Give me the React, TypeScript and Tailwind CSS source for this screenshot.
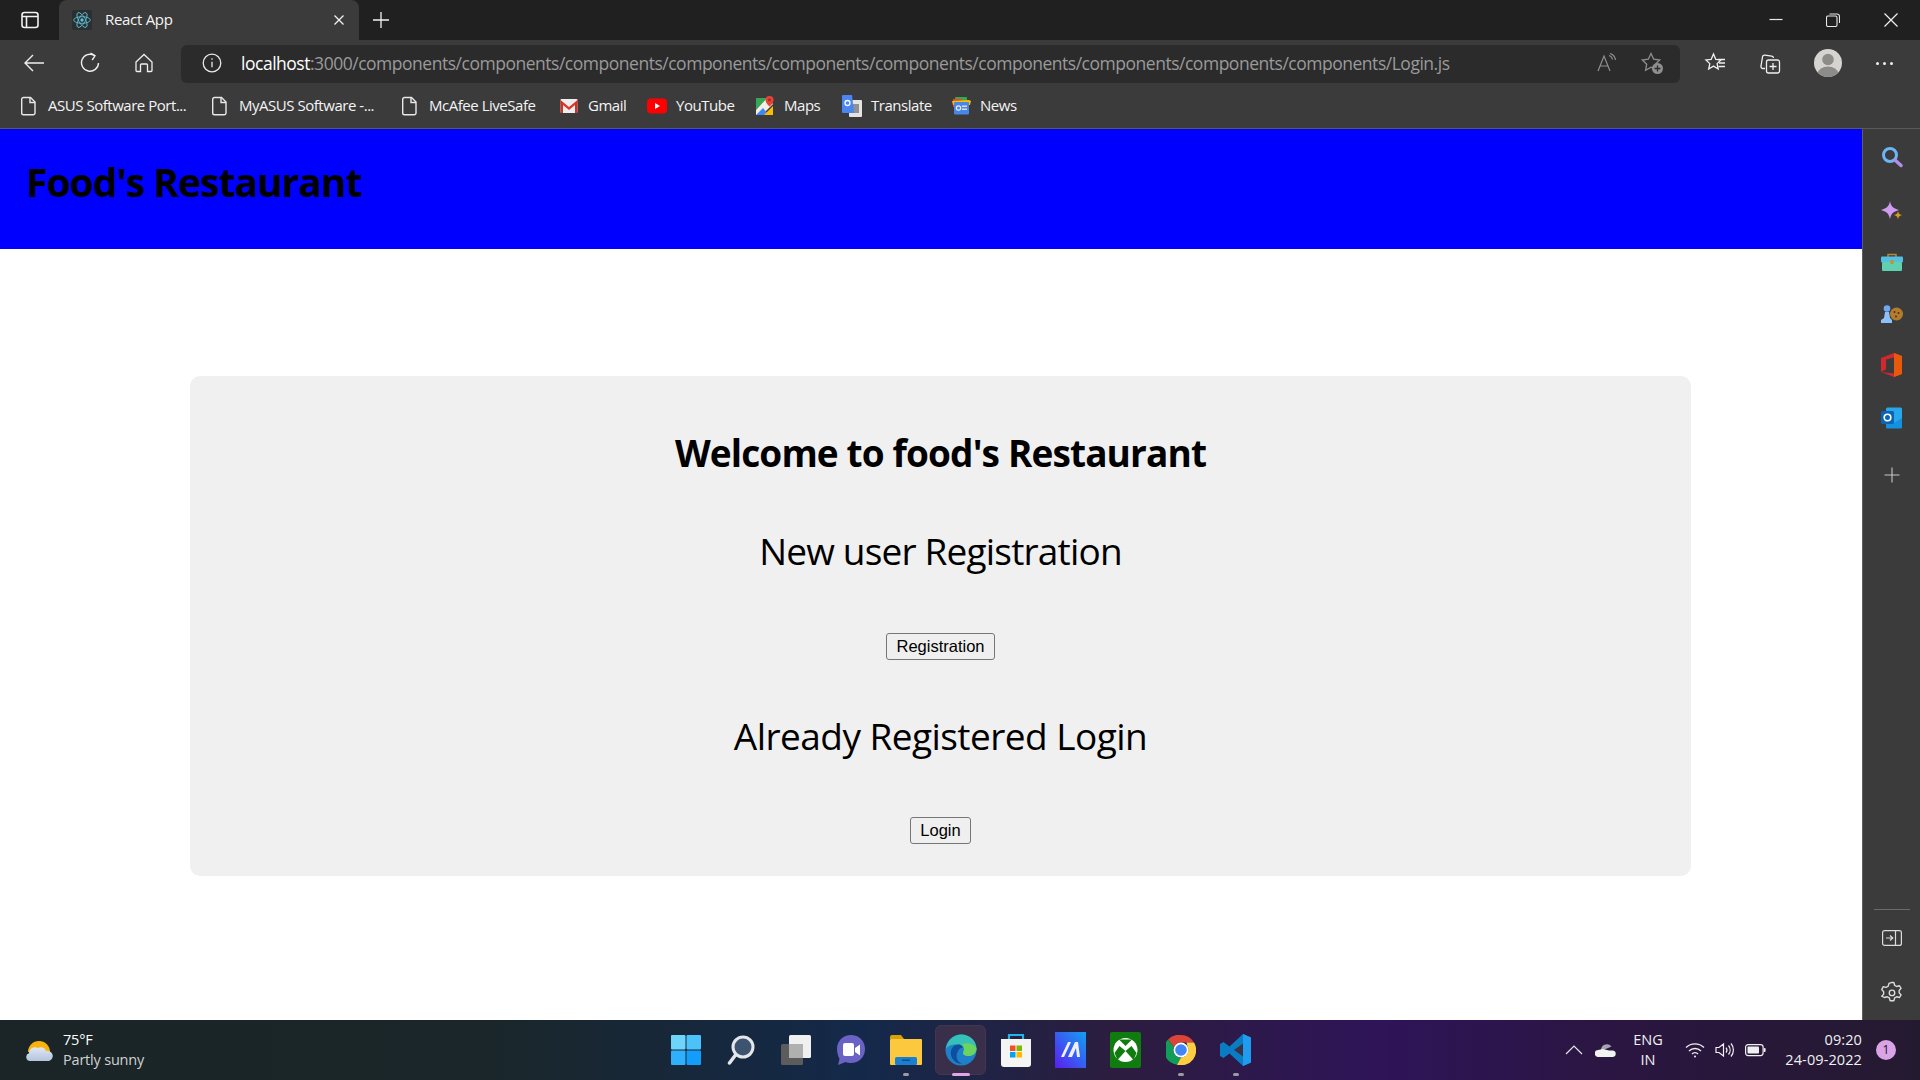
import React from 'react';

const uiFont = "font-['Open_Sans','Noto_Sans',sans-serif]";

const PageIcon = () => (
  <svg width="18" height="20" viewBox="0 0 18 20" fill="none" stroke="#e8e8e8" strokeWidth="1.4">
    <path d="M3.5 1.5h7l4.5 4.5v11a1.8 1.8 0 0 1-1.8 1.8H3.5a1.8 1.8 0 0 1-1.8-1.8V3.3a1.8 1.8 0 0 1 1.8-1.8z" />
    <path d="M10 1.5v5h5" />
  </svg>
);

const GmailIcon = () => (
  <svg width="18" height="16" viewBox="0 0 18 16">
    <rect x="0.5" y="1" width="17" height="14" rx="1" fill="#eeeeee" />
    <path d="M0.5 2 9 9l8.5-7v3L9 12 0.5 5z" fill="#d9392c" />
    <path d="M0.5 2v13h2.5V5zM17.5 2v13H15V5z" fill="#c5362a" />
  </svg>
);

const YouTubeIcon = () => (
  <svg width="20" height="16" viewBox="0 0 20 16">
    <rect y="0.5" width="20" height="15" rx="4" fill="#ff0000" />
    <path d="M8 5l5 3-5 3z" fill="#fff" />
  </svg>
);

const MapsIcon = () => (
  <svg width="18" height="20" viewBox="0 0 18 20">
    <path d="M0 2h11L0 14z" fill="#34a853" />
    <path d="M0 14 11 2l6 6L6 19H0z" fill="#f3f0e6" />
    <path d="M0 19l7-7 6 7z" fill="#4285f4" />
    <path d="M8 19l9-9v9z" fill="#fbbc04" />
    <path d="M13.5 0a4 4 0 0 1 4 4c0 3-4 6.500-4 6.500S9.500 7 9.500 4a4 4 0 0 1 4-4z" fill="#ea4335" />
    <circle cx="13.500" cy="4" r="1.400" fill="#9c2b22" />
  </svg>
);

const TranslateIcon = () => (
  <svg width="20" height="22" viewBox="0 0 20 22">
    <rect x="7" y="5" width="13" height="17" rx="1" fill="#e4e4e4" />
    <rect x="11" y="9" width="6" height="9" fill="#6d6d6d" opacity="0.7" />
    <path d="M1 0h9l2 18H1a1 1 0 0 1-1-1V1a1 1 0 0 1 1-1z" fill="#4a86f0" />
    <circle cx="5.500" cy="8" r="2.500" fill="none" stroke="#fff" strokeWidth="1.300" />
  </svg>
);

const NewsIcon = () => (
  <svg width="20" height="18" viewBox="0 0 20 18">
    <rect x="4" y="0" width="12" height="8" rx="1" fill="#34a853" />
    <rect x="2" y="2" width="9" height="8" fill="#ea4335" />
    <path d="M1 4l17-1 2 1-1 4H2z" fill="#fbbc04" />
    <rect x="3" y="5" width="15" height="12.500" rx="1" fill="#4a86e8" />
    <rect x="11" y="8.500" width="5" height="1.500" fill="#cfe0fb" />
    <rect x="11" y="11.500" width="5" height="1.500" fill="#cfe0fb" />
    <circle cx="7.500" cy="11" r="2.200" fill="none" stroke="#e6effd" strokeWidth="1.200" />
  </svg>
);

const bookmarks = [
  { label: 'ASUS Software Port...', icon: <PageIcon />, width: 'w-[191px]' },
  { label: 'MyASUS Software -...', icon: <PageIcon />, width: 'w-[190px]' },
  { label: 'McAfee LiveSafe', icon: <PageIcon />, width: 'w-[159px]' },
  { label: 'Gmail', icon: <GmailIcon />, width: 'w-[88px]' },
  { label: 'YouTube', icon: <YouTubeIcon />, width: 'w-[108px]' },
  { label: 'Maps', icon: <MapsIcon />, width: 'w-[87px]' },
  { label: 'Translate', icon: <TranslateIcon />, width: 'w-[109px]' },
  { label: 'News', icon: <NewsIcon />, width: 'w-[80px]' },
];

const ReactIcon = () => (
  <svg width="20" height="20" viewBox="-12 -12 24 24" fill="none" stroke="#61c3d8" strokeWidth="1">
    <rect x="-12" y="-12" width="24" height="24" rx="2" fill="#2a2f31" stroke="none" />
    <circle r="2" fill="#61c3d8" stroke="none" />
    <ellipse rx="10" ry="4" />
    <ellipse rx="10" ry="4" transform="rotate(60)" />
    <ellipse rx="10" ry="4" transform="rotate(120)" />
  </svg>
);

const TitleBar = () => (
  <div className="flex h-10 items-end bg-[#202020] text-white">
    <div className="flex h-10 w-[59px] items-center justify-center">
      <svg width="20" height="20" viewBox="0 0 20 20" fill="none" stroke="#f2f2f2" strokeWidth="1.600">
        <rect x="2" y="2.500" width="16" height="15" rx="2.500" />
        <path d="M2 6.500h16M6.500 6.500v11" />
      </svg>
    </div>
    <div className="flex h-10 w-[300px] items-center rounded-t-lg bg-[#3b3b3b] pl-[13px]">
      <ReactIcon />
      <span className="-mt-px ml-[13px] w-[228px] text-[15px] tracking-[-0.3px] text-[#f5f5f5]">React App</span>
      <svg width="12" height="12" viewBox="0 0 12 12" stroke="#f2f2f2" strokeWidth="1.300">
        <path d="M1.500 1.500l9 9M10.500 1.500l-9 9" />
      </svg>
    </div>
    <div className="flex h-10 w-[44px] items-center justify-center">
      <svg width="18" height="18" viewBox="0 0 18 18" stroke="#f2f2f2" strokeWidth="1.300">
        <path d="M9 1v16M1 9h16" />
      </svg>
    </div>
    <div className="flex-1" />
    <div className="flex h-10 items-center pr-[22px]">
      <svg width="14" height="14" viewBox="0 0 14 14" stroke="#e8e8e8" strokeWidth="1.200">
        <path d="M0.500 6.500h13" />
      </svg>
      <svg className="ml-[43px]" width="14" height="14" viewBox="0 0 14 14" fill="none" stroke="#e8e8e8" strokeWidth="1.100">
        <rect x="0.500" y="3" width="10.500" height="10.500" rx="1.500" />
        <path d="M3.500 1h7.500a2.500 2.500 0 0 1 2.500 2.500V10" />
      </svg>
      <svg className="ml-[44px]" width="14" height="14" viewBox="0 0 14 14" stroke="#f2f2f2" strokeWidth="1.200">
        <path d="M0.500 0.500l13 13M13.500 0.500l-13 13" />
      </svg>
    </div>
  </div>
);

const AddressBar = () => (
  <div className="flex h-[43px] items-end bg-[#3b3b3b]">
    <div className="flex h-[38px] w-[181px] items-center pb-[2px] pl-[23px]">
      <svg width="22" height="20" viewBox="0 0 22 20" fill="none" stroke="#efefef" strokeWidth="1.400">
        <path d="M21 10H2M10 2l-8 8 8 8" />
      </svg>
      <svg className="ml-[35px]" width="20" height="22" viewBox="0 0 20 22" fill="none" stroke="#efefef" strokeWidth="1.400">
        <path d="M14.500 3.500A8.500 8.500 0 1 0 18.500 11" />
        <path d="M10.500 1l4.500 2.800-2.800 4.200" />
      </svg>
      <svg className="ml-[34px]" width="20" height="20" viewBox="0 0 20 20" fill="none" stroke="#efefef" strokeWidth="1.300">
        <path d="M2 9l8-7.500L18 9v8.500a1 1 0 0 1-1 1h-3.500V12a1 1 0 0 0-1-1h-5a1 1 0 0 0-1 1v6.500H3a1 1 0 0 1-1-1z" />
      </svg>
    </div>
    <div className="flex h-[38px] w-[1499px] items-center rounded-md bg-[#2b2b2b] pb-[2px] pl-[21px]">
      <svg width="20" height="20" viewBox="0 0 20 20" fill="none" stroke="#e8e8e8" strokeWidth="1.300">
        <circle cx="10" cy="10" r="8.800" />
        <path d="M10 8.800v5.500M10 5.200v1.600" />
      </svg>
      <span className={`ml-[19px] w-[1340px] whitespace-nowrap text-[17.500px] tracking-[-0.48px] ${uiFont}`}>
        <span className="text-white">localhost</span>
        <span className="text-[#9a9a9a]">:3000/components/components/components/components/components/components/components/components/components/components/Login.js</span>
      </span>
      <svg className="ml-[16px]" width="20" height="20" viewBox="0 0 20 20" fill="none" stroke="#8f8f8f" strokeWidth="1.200">
        <path d="M1 18L7 3l6 15M3.200 13h7.600" />
        <path d="M12 2.500a5 5 0 0 1 3.500 4M13 0.500a8 8 0 0 1 5.500 6.500" />
      </svg>
      <svg className="ml-[23px]" width="24" height="24" viewBox="0 0 24 24" fill="none" stroke="#8f8f8f" strokeWidth="1.300">
        <path d="M11 2.500l2.700 5.700 6 .8-4.400 4.200 1.100 6-5.400-3-5.400 3 1.100-6L2.300 9l6-.8z" />
        <circle cx="17.500" cy="17.500" r="5.500" fill="#8f8f8f" stroke="none" />
        <path d="M17.500 14.500v6M14.500 17.500h6" stroke="#2b2b2b" strokeWidth="1.300" />
      </svg>
    </div>
    <div className="flex h-[38px] items-center pb-[2px]">
      <svg className="ml-[24px]" width="22" height="22" viewBox="0 0 22 22" fill="none" stroke="#efefef" strokeWidth="1.300">
        <path d="M9.500 2l2.300 5.300 5.200.6-3.900 3.700 1.100 5.400-4.700-2.900-4.800 2.900 1.100-5.400L1.900 7.900l5.300-.6z" />
        <path d="M14 7.500h7M15 11h6M14.500 14.500h6.500" />
      </svg>
      <svg className="ml-[33px]" width="22" height="22" viewBox="0 0 22 22" fill="none" stroke="#efefef" strokeWidth="1.300">
        <path d="M6 16.500H4a2 2 0 0 1-2-2.500l1.500-9a2 2 0 0 1 2.300-1.800l7 1a2 2 0 0 1 1.700 1.800" />
        <rect x="7.500" y="8" width="13" height="13" rx="2" />
        <path d="M14 11v7M10.500 14.500h7" />
      </svg>
      <svg className="ml-[33px]" width="28" height="28" viewBox="0 0 28 28">
        <clipPath id="avatarClip">
          <circle cx="14" cy="14" r="14" />
        </clipPath>
        <g clipPath="url(#avatarClip)">
          <rect width="28" height="28" fill="#d6d4d0" />
          <circle cx="14" cy="10.500" r="5.800" fill="#8e8c88" />
          <ellipse cx="14" cy="24" rx="10" ry="6.500" fill="#8e8c88" />
        </g>
      </svg>
      <div className="ml-[34px] flex items-center gap-[4px]">
        <span className="size-[3px] rounded-full bg-[#f0f0f0]" />
        <span className="size-[3px] rounded-full bg-[#f0f0f0]" />
        <span className="size-[3px] rounded-full bg-[#f0f0f0]" />
      </div>
    </div>
  </div>
);

const BookmarksBar = () => (
  <div className="flex h-[46px] items-center border-b border-[#5a5a5a] bg-[#3b3b3b] pl-[19px]">
    {bookmarks.map((b) => (
      <div key={b.label} className={`flex items-center ${b.width}`}>
        <span className="flex w-[20px] justify-center">{b.icon}</span>
        <span className="ml-[9px] whitespace-nowrap text-[15px] tracking-[-0.47px] text-[#f4f4f4]">{b.label}</span>
      </div>
    ))}
  </div>
);

const SideBar = () => (
  <div className="flex w-[58px] flex-col items-center border-l border-[#5e5e5e] bg-[#3b3b3b] pt-[17px]">
    <svg width="22" height="22" viewBox="0 0 22 22" fill="none">
      <circle cx="9" cy="9" r="6.500" stroke="#6db5f5" strokeWidth="3" />
      <path d="M14 14l6 5.500" stroke="#b08fe8" strokeWidth="3.500" strokeLinecap="round" />
    </svg>
    <svg className="mt-[33px]" width="22" height="22" viewBox="0 0 22 22">
      <path d="M9 0c.8 5 2.800 7.200 9 9-6.200 1.800-8.200 4-9 9.500C8.200 13 6 10.800 0 9c6-1.800 8.200-4 9-9z" fill="#cf9cf2" />
      <path d="M17 10c.4 2.500 1.200 3.400 4 4-2.800.8-3.600 1.600-4 4.500-.4-2.900-1.200-3.700-4-4.500 2.800-.6 3.600-1.500 4-4z" fill="#d89a20" />
    </svg>
    <svg className="mt-[30px]" width="22" height="18" viewBox="0 0 22 18">
      <path d="M7 4V1.500h8V4" fill="none" stroke="#b08a3c" strokeWidth="1.500" />
      <rect y="3.500" width="22" height="6" rx="1" fill="#55bfe0" />
      <rect x="1" y="9" width="20" height="9" rx="1" fill="#5fd0b0" />
      <rect x="9.500" y="7" width="3" height="4" fill="#c98f2d" />
    </svg>
    <svg className="mt-[34px]" width="22" height="18" viewBox="0 0 22 18">
      <circle cx="15.500" cy="9" r="6.500" fill="#b27c2c" />
      <circle cx="13.500" cy="7" r="1" fill="#4e3212" />
      <circle cx="17.500" cy="8" r="1" fill="#4e3212" />
      <circle cx="15" cy="11.500" r="1" fill="#4e3212" />
      <circle cx="6" cy="3.500" r="3.300" fill="#6ea9f2" />
      <path d="M4 7h4l1 6 2 2v3H0v-3l3-2z" fill="#8cc0fa" />
    </svg>
    <svg className="mt-[30px]" width="22" height="24" viewBox="0 0 22 24">
      <path d="M0 5 13 0l8 3v18l-8 3L0 19l13 1.500V4.500L5 6.500v10L0 19z" fill="#d2272f" />
      <path d="M13 0l8 3v18l-8 3z" fill="#e8590c" />
    </svg>
    <svg className="mt-[30px]" width="22" height="22" viewBox="0 0 22 22">
      <rect x="5" y="0.500" width="16" height="20" rx="1.500" fill="#28a8ea" />
      <path d="M5 11l8 5 8-5v9.500a1 1 0 0 1-1 1H6a1 1 0 0 1-1-1z" fill="#1490df" />
      <rect y="4" width="13" height="13" rx="1.500" fill="#0a64b5" />
      <circle cx="6.500" cy="10.500" r="3.300" fill="none" stroke="#fff" strokeWidth="1.600" />
    </svg>
    <svg className="mt-[38px]" width="16" height="16" viewBox="0 0 16 16" stroke="#c8c8c8" strokeWidth="1.100">
      <path d="M8 0.500v15M0.500 8h15" />
    </svg>
    <div className="flex-1" />
    <div className="h-px w-[36px] bg-[#6b6b6b]" />
    <svg className="mt-[20px]" width="20" height="16" viewBox="0 0 20 16" fill="none" stroke="#dcdcdc" strokeWidth="1.200">
      <rect x="0.600" y="0.600" width="18.800" height="14.800" rx="2" />
      <path d="M13.500 0.600v14.800M4 8h6.500M8 5.500 10.800 8 8 10.500" />
    </svg>
    <svg className="mb-[17px] mt-[35px]" width="22" height="22" viewBox="0 0 24 24" fill="none" stroke="#dcdcdc" strokeWidth="1.500" strokeLinejoin="round">
      <path d="M12 1.500l2 .2.900 3 2.300 1.300 3-.8 1.700 2.800-2.100 2.300v2.600l2.100 2.300-1.700 2.800-3-.8-2.300 1.300-.9 3h-4l-.9-3-2.300-1.300-3 .8L.8 16.600l2.100-2.300v-2.600L.8 9.400 2.500 6.200l3 .8 2.300-1.300.9-3z" />
      <circle cx="12" cy="13" r="3" />
    </svg>
  </div>
);

const Dot = ({ wide }: { wide?: boolean }) => (
  <span className={`mt-[3px] h-[3px] rounded-full ${wide ? 'w-[18px] bg-[#e2a6e8]' : 'w-[6px] bg-[#9b9ba3]'}`} />
);

const taskIcons = [
  {
    key: 'start',
    svg: (
      <svg width="30" height="30" viewBox="0 0 30 30">
        <rect width="14.500" height="14.500" rx="1" fill="#6fd4fb" />
        <rect x="15.500" width="14.500" height="14.500" rx="1" fill="#4cc2fa" />
        <rect y="15.500" width="14.500" height="14.500" rx="1" fill="#2eb1fa" />
        <rect x="15.500" y="15.500" width="14.500" height="14.500" rx="1" fill="#129dfa" />
      </svg>
    ),
  },
  {
    key: 'search',
    svg: (
      <svg width="28" height="30" viewBox="0 0 28 30" fill="none">
        <circle cx="16" cy="12" r="10" fill="#3d5470" stroke="#e4e6ea" strokeWidth="3" />
        <path d="M8.500 20 2.500 28" stroke="#e4e6ea" strokeWidth="3.500" strokeLinecap="round" />
      </svg>
    ),
  },
  {
    key: 'views',
    svg: (
      <svg width="30" height="30" viewBox="0 0 30 30">
        <rect y="9" width="22" height="21" rx="1.500" fill="#5c5c5c" />
        <rect x="8" width="22" height="23" rx="1.500" fill="#f0f0f0" />
        <rect x="8" y="9" width="14" height="14" fill="#b0b0b0" />
      </svg>
    ),
  },
  {
    key: 'chat',
    svg: (
      <svg width="30" height="32" viewBox="0 0 30 32">
        <path d="M15 1c8 0 14 6 14 14s-6 14-14 14c-2 0-4-.4-5.500-1L2 31l1.500-6C2 22 1 18.500 1 15 1 7 7 1 15 1z" fill="#6a63c5" />
        <rect x="7" y="9" width="11" height="13" rx="2" fill="#fff" />
        <path d="M19 14l5-3.500v11L19 18z" fill="#fff" />
      </svg>
    ),
  },
  {
    key: 'files',
    dot: true,
    svg: (
      <svg width="32" height="30" viewBox="0 0 32 30">
        <path d="M0 2a2 2 0 0 1 2-2h9l3 4h-14z" fill="#d9a106" />
        <rect y="4" width="32" height="26" rx="1" fill="#fcc93e" />
        <rect x="5" y="22" width="22" height="8" rx="1.500" fill="#1b7fd1" />
        <rect x="12" y="24.500" width="8" height="1.500" fill="#0a4f8a" />
      </svg>
    ),
  },
  {
    key: 'edge',
    wide: true,
    active: true,
    svg: (
      <svg width="32" height="32" viewBox="0 0 32 32">
        <circle cx="16" cy="16" r="15.500" fill="#1f7fc8" />
        <path d="M1 15C2 6 9 .5 16.500 .5 25 .5 31.500 7 31.500 14.500c0 5-4 7.500-8 7.500-3 0-6-1.500-5.500-3.500 2-2.500 1-7.500-4-8C8 10 3 11 1 15z" fill="#35c1b8" />
        <path d="M31.500 14.500c0 5-4 7.500-8 7.500-3 0-6-1.500-5.500-3.500 2-2.500 1-7-2-8.500 7-2 14 0 15.500 4.500z" fill="#6bd35f" />
        <path d="M14 10.500c-6 0-9 5-8 10.500 1 5 6 9 11 9-5-2-7-8-4-13 1-2 3-3.500 5-3.500-1-1.800-2.500-3-4-3z" fill="#0c4f9c" />
      </svg>
    ),
  },
  {
    key: 'store',
    svg: (
      <svg width="30" height="36" viewBox="0 0 30 36">
        <path d="M8 9V3h14v6" fill="none" stroke="#25b4ea" strokeWidth="2.200" />
        <path d="M0 7h30v25a3 3 0 0 1-3 3H3a3 3 0 0 1-3-3z" fill="#f4f4f4" />
        <rect x="9" y="13.500" width="5.500" height="5.500" fill="#f25022" />
        <rect x="15.500" y="13.500" width="5.500" height="5.500" fill="#7fba00" />
        <rect x="9" y="20" width="5.500" height="5.500" fill="#00a4ef" />
        <rect x="15.500" y="20" width="5.500" height="5.500" fill="#ffb900" />
      </svg>
    ),
  },
  {
    key: 'mail',
    svg: (
      <svg width="31" height="36" viewBox="0 0 31 36">
        <defs>
          <linearGradient id="mailGrad" x1="0" y1="1" x2="1" y2="0">
            <stop offset="0" stopColor="#5b1df0" />
            <stop offset="1" stopColor="#12a0f2" />
          </linearGradient>
        </defs>
        <rect width="31" height="36" fill="url(#mailGrad)" />
        <path d="M6 25 13 10h3L9 25zM13 25l7-15h3l2 15h-3l-1-9-4 9z" fill="#eef2ff" />
      </svg>
    ),
  },
  {
    key: 'xbox',
    svg: (
      <svg width="31" height="36" viewBox="0 0 31 36">
        <rect width="31" height="36" rx="2" fill="#107c10" />
        <circle cx="15.500" cy="18" r="12" fill="#fff" />
        <path d="M15.500 14 9 7.500h13zM15.500 19l-8 9-3-7 5-7zM15.500 19l8 9 3-7-5-7z" fill="#107c10" />
      </svg>
    ),
  },
  {
    key: 'chrome',
    dot: true,
    svg: (
      <svg width="30" height="30" viewBox="0 0 30 30">
        <path d="M15 0a15 15 0 0 1 13 7.500H15a7.500 7.500 0 0 0-7 5L2 4.500A15 15 0 0 1 15 0z" fill="#db4437" />
        <path d="M2 4.500l6 8a7.500 7.500 0 0 0 7 10l-4 7.200A15 15 0 0 1 2 4.500z" fill="#0f9d58" />
        <path d="M28 7.500A15 15 0 0 1 11 29.700l4-7.200a7.500 7.500 0 0 0 6.500-11l-1-4z" fill="#ffcd40" />
        <circle cx="15" cy="15" r="7.500" fill="#fff" />
        <circle cx="15" cy="15" r="5.800" fill="#4285f4" />
      </svg>
    ),
  },
  {
    key: 'vscode',
    dot: true,
    svg: (
      <svg width="32" height="32" viewBox="0 0 32 32">
        <path d="M23 0l8 3.500v25L23 32 9.500 19.500 3.500 24 0 22V10l3.500-2 6 4.500z" fill="#0a7cc4" />
        <path d="M23 0l8 3.500v25L23 32z" fill="#1f9cf0" />
        <path d="M23 9.500 14 16l9 6.500z" fill="#3b3147" />
      </svg>
    ),
  },
];

const TaskBar = () => (
  <div className={`flex h-[60px] bg-[linear-gradient(90deg,#1b2527_0%,#1a2629_25%,#14294a_45%,#2c1d3f_58%,#2e1458_72%,#2a1640_85%,#241a30_100%)] text-white ${uiFont}`}>
    <div className="flex w-[658px] items-center pl-[26px]">
      <svg width="28" height="26" viewBox="0 0 28 26">
        <defs>
          <linearGradient id="cloudGrad" x1="0" y1="0" x2="0" y2="1">
            <stop offset="0" stopColor="#dfe7f3" />
            <stop offset="1" stopColor="#b4c4dc" />
          </linearGradient>
        </defs>
        <path d="M2 15a11 11 0 0 1 22 0z" fill="#f7b30b" />
        <path d="M4 24a4 4 0 0 1-1-7.800A6 6 0 0 1 12 11a5.500 5.500 0 0 1 8 3 5 5 0 0 1 3 10z" fill="url(#cloudGrad)" />
      </svg>
      <div className="ml-[9px] flex flex-col text-[14.500px] leading-[20px] tracking-[-0.2px]">
        <span className="text-white">75°F</span>
        <span className="text-[#cfd2d4]">Partly sunny</span>
      </div>
    </div>
    <div className="flex items-stretch">
      {taskIcons.map((t) => (
        <div key={t.key} className="relative flex h-[60px] w-[55px] flex-col items-center justify-center">
          {t.active && <div className="absolute left-[2px] top-[5px] h-[50px] w-[51px] rounded-md border border-[#43374f] bg-[#3a2f4a]" />}
          <div className="relative flex h-[36px] items-center">{t.svg}</div>
          <div className="absolute bottom-[4px] flex">{t.wide ? <Dot wide /> : t.dot ? <Dot /> : null}</div>
        </div>
      ))}
    </div>
    <div className="flex flex-1 items-center">
      <svg className="ml-[302px]" width="18" height="10" viewBox="0 0 18 10" fill="none" stroke="#e6e6e6" strokeWidth="1.200">
        <path d="M1 9l8-8 8 8" />
      </svg>
      <svg className="ml-[12px]" width="22" height="14" viewBox="0 0 22 14">
        <path d="M6 6a6 6 0 0 1 10.500-2.500L6 8z" fill="#a6a4ac" />
        <path d="M3.500 14A3.500 3.500 0 0 1 3 7l5-1 6 1.500h4a3.300 3.300 0 0 1 0 6.500z" fill="#f2f2f2" />
      </svg>
      <div className="ml-[13px] flex w-[36px] flex-col items-center text-[14.500px] leading-[20px] text-[#f0f0f0]">
        <span>ENG</span>
        <span>IN</span>
      </div>
      <svg className="ml-[19px]" width="20" height="16" viewBox="0 0 20 16" fill="none" stroke="#f0f0f0" strokeWidth="1.300">
        <path d="M1 5.500a13 13 0 0 1 18 0M4 9a8.500 8.500 0 0 1 12 0M7 12a4 4 0 0 1 6 0" />
        <circle cx="10" cy="14.500" r="1" fill="#f0f0f0" stroke="none" />
      </svg>
      <svg className="ml-[10px]" width="20" height="16" viewBox="0 0 20 16" fill="none" stroke="#f0f0f0" strokeWidth="1.200">
        <path d="M1 5.500h3L8.500 2v12L4 10.500H1zM11 5.500a4 4 0 0 1 0 5M13.500 3.500a7 7 0 0 1 0 9M16 1.500a10 10 0 0 1 0 13" />
      </svg>
      <svg className="ml-[10px]" width="21" height="14" viewBox="0 0 21 14" fill="none">
        <rect x="0.600" y="1.600" width="17.500" height="11" rx="2.500" stroke="#f0f0f0" strokeWidth="1.200" />
        <rect x="2.500" y="3.500" width="11.500" height="7" rx="1" fill="#f0f0f0" />
        <rect x="18.800" y="5" width="1.800" height="4" rx="0.800" fill="#f0f0f0" />
      </svg>
      <div className="ml-[12px] flex w-[84px] flex-col items-end whitespace-nowrap text-[14.500px] leading-[20px] tracking-[0.1px] text-[#f0f0f0]">
        <span>09:20</span>
        <span>24-09-2022</span>
      </div>
      <div className="ml-[14px] flex size-[20px] items-center justify-center rounded-full bg-[#d9a3e6] text-[12px] text-[#1d1424]">1</div>
    </div>
  </div>
);

const OutlineButton = ({ label }: { label: string }) => (
  <button className="rounded-[3px] border border-[#767676] bg-[#efefef] px-[9px] py-[2px] font-['Liberation_Sans',sans-serif] text-[16.500px] leading-[21px] text-black">
    {label}
  </button>
);

export default function App() {
  return (
    <div className="flex h-[1080px] w-[1920px] flex-col overflow-hidden bg-white">
      <div className={uiFont}>
        <TitleBar />
        <AddressBar />
        <BookmarksBar />
      </div>
      <div className="flex min-h-0 flex-1">
        <main className={`flex-1 bg-white text-black ${uiFont}`}>
          <header className="h-[120px] bg-[#0000ff] pl-[26px] pt-[27px]">
            <h1 className="text-[39px] font-bold leading-[52px] tracking-[-1px]">Food's Restaurant</h1>
          </header>
          <section className="ml-[190px] mt-[127px] flex h-[500px] w-[1501px] flex-col items-center rounded-[10px] bg-[#f0f0f0] pt-[50px]">
            <h2 className="text-[37px] font-bold leading-[54px] tracking-[-0.87px]">Welcome to food's Restaurant</h2>
            <h3 className="mt-[44px] text-[37px] leading-[54px] tracking-[-0.82px]">New user Registration</h3>
            <div className="mt-[55px]">
              <OutlineButton label="Registration" />
            </div>
            <h3 className="mt-[49px] text-[37px] leading-[54px] tracking-[-0.55px]">Already Registered Login</h3>
            <div className="mt-[54px]">
              <OutlineButton label="Login" />
            </div>
          </section>
        </main>
        <SideBar />
      </div>
      <TaskBar />
    </div>
  );
}
